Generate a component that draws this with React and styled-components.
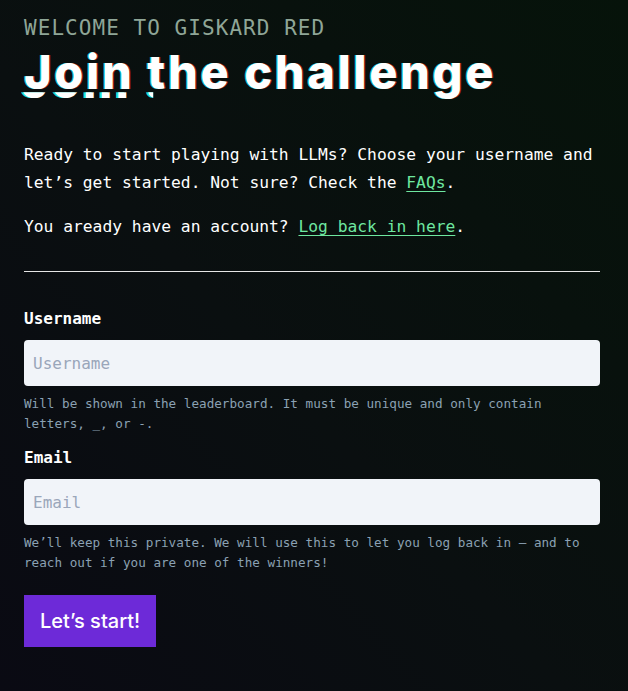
import React from "react";
import styled, { createGlobalStyle } from "styled-components";

const Global = createGlobalStyle`
  html, body { margin: 0; padding: 0; }
  body {
    background: linear-gradient(to top right, #0a0a13 0%, #0a0f10 45%, #06130a 100%);
    min-height: 691px;
    font-family: "DejaVu Sans Mono", "Liberation Mono", monospace;
    color: #fff;
  }
  * { box-sizing: border-box; }
`;

const Page = styled.main`
  width: 628px;
  min-height: 691px;
  padding: 14px 28px 40px 24px;
  display: flex;
  flex-direction: column;
`;

const Eyebrow = styled.div`
  font-family: "DejaVu Sans Mono", monospace;
  font-size: 21px;
  letter-spacing: 1.05px;
  line-height: 28px;
  color: #8fa697;
  text-transform: uppercase;
`;

const Title = styled.h1`
  position: relative;
  margin: 2px 0 0;
  font-family: Inter, "Open Sans", sans-serif;
  font-weight: 800;
  font-size: 47px;
  line-height: 56px;
  letter-spacing: 2.6px;
  color: #fff;
  text-shadow: -1px 0 0 rgba(0, 230, 230, 0.8), 1px 0 0 rgba(230, 40, 40, 0.7);

  &::after {
    content: attr(data-text);
    position: absolute;
    left: 0;
    top: 0;
    color: #fff;
    text-shadow: -2px 0 0 #19e6d6;
    clip-path: inset(70% 72% 14% 0);
    transform: translate(-3px, 9px);
  }
`;

const Intro = styled.div`
  margin-top: 41px;
  display: flex;
  flex-direction: column;
  gap: 16px;
`;

const Para = styled.p`
  margin: 0;
  font-size: 16.3px;
  line-height: 28px;
  color: #fff;
`;

const Link = styled.a`
  color: #6ee7a0;
  text-decoration: underline;
  text-underline-offset: 3px;
`;

const Divider = styled.hr`
  border: 0;
  border-top: 1px solid #e6e6e6;
  margin: 30px 0 37px;
  width: 576px;
`;

const Form = styled.form`
  display: flex;
  flex-direction: column;
  width: 576px;
`;

const Field = styled.div`
  display: flex;
  flex-direction: column;
  margin-bottom: ${(p) => p.$mb || 0}px;
`;

const Label = styled.label`
  font-size: 16px;
  font-weight: bold;
  line-height: 20px;
  color: #fff;
  margin-bottom: 11px;
`;

const Input = styled.input`
  width: 100%;
  height: 46px;
  border: 0;
  border-radius: 4px;
  background: #f1f4f9;
  padding: 0 9px;
  font-family: "DejaVu Sans Mono", monospace;
  font-size: 16px;
  color: #222;
  outline: none;
  &::placeholder {
    color: #9aa6ba;
  }
`;

const Help = styled.p`
  margin: 8px 0 0;
  font-size: 12.65px;
  line-height: 20px;
  color: #8ba1b3;
`;

const Button = styled.button`
  align-self: flex-start;
  margin-top: 22px;
  height: 52px;
  padding: 0 16px;
  border: 0;
  background: #6d2ad8;
  color: #fff;
  font-family: Inter, "Open Sans", sans-serif;
  font-weight: 500;
  font-size: 20px;
  cursor: pointer;
`;

export default function App() {
  return (
    <>
      <Global />
      <Page>
        <Eyebrow>Welcome to Giskard Red</Eyebrow>
        <Title data-text="Join the challenge">Join the challenge</Title>
        <Intro>
          <Para>
            Ready to start playing with LLMs? Choose your username and let’s get
            started. Not sure? Check the <Link href="#">FAQs</Link>.
          </Para>
          <Para>
            You aready have an account? <Link href="#">Log back in here</Link>.
          </Para>
        </Intro>
        <Divider />
        <Form onSubmit={(e) => e.preventDefault()}>
          <Field $mb={14}>
            <Label htmlFor="username">Username</Label>
            <Input id="username" placeholder="Username" />
            <Help>
              Will be shown in the leaderboard. It must be unique and only contain
              letters, _, or -.
            </Help>
          </Field>
          <Field>
            <Label htmlFor="email">Email</Label>
            <Input id="email" placeholder="Email" />
            <Help>
              We’ll keep this private. We will use this to let you log back in – and
              to reach out if you are one of the winners!
            </Help>
          </Field>
          <Button type="submit">Let’s start!</Button>
        </Form>
      </Page>
    </>
  );
}
